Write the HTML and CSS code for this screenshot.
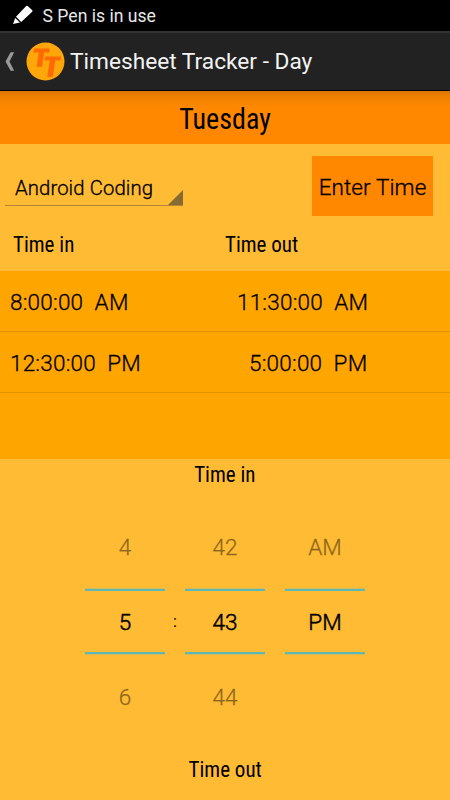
FILE: index.html
```
<!DOCTYPE html>
<html lang="en">
<head>
<meta charset="utf-8">
<title>Timesheet Tracker - Day</title>
<link rel="stylesheet" href="styles.css">
</head>
<body>
<div class="status">
  <svg class="pen" width="20" height="20" viewBox="0 0 20 20"><path fill="#fff" d="M14.7 1 19.3 5.3Q19.8 6 19.2 6.7L8.2 17 3 11.8 13.2 1Q14 .4 14.7 1ZM2.2 13 7 17.6 0 19Z"/></svg>
  <span class="status-text">S Pen is in use</span>
</div>
<header class="bar">
  <svg class="back" width="10" height="19" viewBox="0 0 10 19"><path fill="#999" d="M5.6.3H9.2L4.5 9.5 9.2 18.7H5.6L.5 9.5Z"/></svg>
  <svg class="logo" width="39" height="39" viewBox="0 0 39 39">
    <circle cx="19.5" cy="19.5" r="19" fill="#ffa60a"/>
    <g fill="#ff6a00"><path d="M8 6.5H23.8L23.2 10.4H18.2L16 24.8H10.6L12.8 10.4H7.4Z"/><path d="M19.2 14.6H35L34.4 18.5H29.2L26.8 35H21.2L23.8 18.5H18.6Z"/></g>
  </svg>
  <h1 class="title">Timesheet Tracker - Day</h1>
</header>
<main>
  <div class="day"><span class="condensed">Tuesday</span></div>
  <div class="controls">
    <div class="spinner"><span>Android Coding</span><svg class="corner" width="15" height="15" viewBox="0 0 15 15"><path d="M15 0V15H0Z" fill="#866a31"/></svg></div>
    <button class="enter"><span>Enter Time</span></button>
  </div>
  <div class="heads"><span class="condensed label">Time in</span><span class="condensed label">Time out</span></div>
  <div class="list">
    <div class="row"><span class="in">8:00:00  AM</span><span class="out">11:30:00  AM</span></div>
    <div class="row"><span class="in">12:30:00  PM</span><span class="out">5:00:00  PM</span></div>
  </div>
  <div class="picker-title"><span class="condensed label">Time in</span></div>
  <div class="picker">
    <div class="wheel"><span class="near prev">4</span><span class="current">5</span><span class="near next">6</span></div>
    <span class="colon">:</span>
    <div class="wheel"><span class="near prev">42</span><span class="current">43</span><span class="near next">44</span></div>
    <div class="wheel last"><span class="near prev">AM</span><span class="current">PM</span><span class="near next"></span></div>
  </div>
  <div class="picker-title out-title"><span class="condensed label">Time out</span></div>
</main>
</body>
</html>
```
FILE: styles.css
```
* { box-sizing: border-box; }
body { margin: 0; width: 450px; height: 800px; overflow: hidden; background: #ffbb33; color: #000; font-family: Roboto, sans-serif; font-size: 22.5px; line-height: 26px; }
.status { height: 31px; background: #000; display: flex; align-items: center; padding-left: 13px; }
.pen { flex: none; margin-top: -1px; }
.status-text { color: #e8e8e8; font-size: 17.6px; line-height: 22px; margin-left: 9.5px; }
.bar { height: 60px; background: #222; border-top: 2px solid #333; border-bottom: 1px solid #000014; display: flex; align-items: center; padding-left: 5px; }
.back { flex: none; }
.logo { flex: none; margin-left: 10.5px; }
.title { margin: 0 0 0 5.5px; font-size: 22.7px; font-weight: 400; color: #f3f3f3; white-space: nowrap; }
.condensed { display: inline-block; font-stretch: 75%; white-space: nowrap; transform: scaleX(.935); }
.day { height: 53px; background: linear-gradient(#dc7600 0, #ef8000 6px, #ff8800 16px); text-align: center; font-size: 30px; line-height: 55px; }
.controls { display: flex; height: 83px; padding: 12px 17px 0 5px; justify-content: space-between; }
.spinner { position: relative; width: 178px; height: 50px; border-bottom: 1px solid #b18535; padding: 20px 0 0 10px; font-size: 20.3px; line-height: 24px; letter-spacing: .1px; }
.corner { position: absolute; right: 0; bottom: 0; }
.enter { width: 121px; height: 60px; border: 0; padding: 2px 0 0; background: #ff8800; font: inherit; color: #000; letter-spacing: .1px; white-space: nowrap; }
.heads { display: grid; grid-template-columns: 212.5px 1fr; height: 44px; padding: 4px 0 0 12.5px; }
.heads .condensed { transform-origin: left; }
.list { height: 188px; background: #ffa500; }
.row { display: grid; grid-template-columns: 227px 1fr; height: 61px; border-bottom: 1px solid #df9106; padding: 18px 0 0 10px; white-space: pre; letter-spacing: .2px; }
.row:nth-child(2) .out { padding-left: 12px; }
.spinner, .enter, .row, .near { font-weight: 300; -webkit-text-stroke: .3px #000; }
.picker-title { height: 31px; padding-top: 2px; text-align: center; }
.out-title { padding-top: 1px; }
.picker { display: flex; height: 265px; padding: 20px 0 0 85px; }
.wheel { width: 80px; display: flex; flex-direction: column; text-align: center; }
.wheel.last { margin-left: 20px; }
.near { height: 79px; opacity: .45; padding-top: 24px; }
.current { height: 65px; border: solid #5cb8b5; border-width: 2px 0; padding-top: 18px; font-weight: 300; -webkit-text-stroke: .5px #000; box-shadow: 0 -1px #d5ba5c, 0 1px #d5ba5c; }
.near.next { padding-top: 30px; }
.colon { width: 20px; text-align: center; font-size: 16px; padding-top: 99px; }
```
